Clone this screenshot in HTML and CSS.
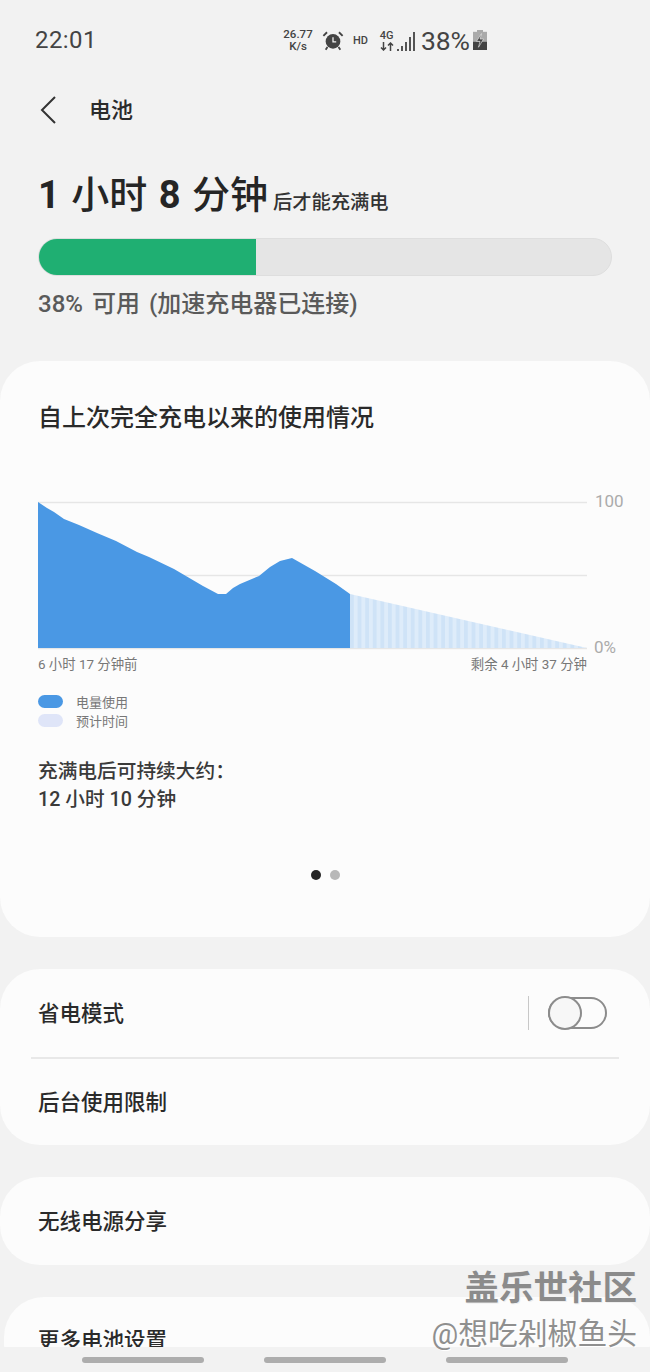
FILE: index.html
```html
<!DOCTYPE html>
<html lang="zh">
<head>
<meta charset="utf-8">
<title>电池</title>
<link rel="stylesheet" href="styles.css">
</head>
<body>
<div class="page">
  <div class="status">
    <span class="time">22:01</span>
    <div class="status-icons">
      <span class="speed">26.77<br>K/s</span>
      <svg class="alarm" width="22" height="21" viewBox="0 0 24 22">
        <circle cx="12" cy="12" r="8" fill="#444"/>
        <path d="M12 7.500V12.500H15.500" fill="none" stroke="#f2f2f2" stroke-width="1.400"/>
        <path d="M1.500 6 5.500 2M22.500 6 18.500 2" stroke="#444" stroke-width="2" fill="none"/>
        <path d="M6 18 4 21M18 18 20 21" stroke="#444" stroke-width="2" fill="none"/>
      </svg>
      <span class="hd">HD</span>
      <div class="net">
        <span class="net-4g">4G</span>
        <svg width="14" height="9" viewBox="0 0 14 9"><path d="M3.500 0V8M1 5.500 3.500 8 6 5.500M10.500 9V1M8 3.500 10.500 1 13 3.500" stroke="#444" stroke-width="1.500" fill="none"/></svg>
      </div>
      <svg class="signal" width="18" height="23" viewBox="0 0 18 23">
        <path d="M1 20V22M5 17V22M9 13V22M13 8V22M17 3V22" stroke="#444" stroke-width="1.800" fill="none"/>
      </svg>
      <span class="pct">38%</span>
      <svg class="batt" width="14" height="20" viewBox="0 0 14 22" preserveAspectRatio="none">
        <rect x="4" y="0" width="6" height="3" fill="#aaa"/>
        <rect x="0" y="2" width="14" height="20" fill="#aaa"/>
        <rect x="0" y="13" width="14" height="9" fill="#444"/>
        <path d="M8.500 4 3.500 12.500H7L5.500 19 10.500 10H7Z" fill="#444" stroke="#f2f2f2" stroke-width=".6"/>
      </svg>
    </div>
  </div>

  <div class="toolbar">
    <svg class="back" width="18" height="30" viewBox="0 0 18 30"><path d="M16 2 3 15 16 28" fill="none" stroke="#333" stroke-width="2"/></svg>
    <span class="toolbar-title">电池</span>
  </div>

  <section class="summary">
    <div class="eta"><span class="eta-main"><b>1</b> 小时 <b>8</b> 分钟</span> <span class="eta-sub">后才能充满电</span></div>
    <div class="bar"><div class="bar-fill"></div></div>
    <div class="avail">38% 可用 (加速充电器已连接)</div>
  </section>

  <section class="card usage">
    <h2 class="usage-title">自上次完全充电以来的使用情况</h2>
    <svg class="chart" width="650" height="187" viewBox="0 490 650 187">
      <defs>
        <pattern id="stripes" x="350" y="0" width="7.600" height="10" patternUnits="userSpaceOnUse">
          <rect width="7.600" height="10" fill="#cfe3f7"/>
          <rect x="3.800" width="3.800" height="10" fill="#deecfa"/>
        </pattern>
      </defs>
      <path d="M38 502.500H587M38 575.500H587M38 648.500H587" stroke="#e6e6e6" stroke-width="1.500" fill="none"/>
      <path d="M38 502 L47 508 L54 512 L64 519 L79 525 L97 533 L116 541 L137 552 L149 557 L174 569 L203 586 L218 594 L226 594 L233 588 L240 584 L259 576 L270 567 L280 561 L292 558 L315 571 L336 584 L350 594 V648 H38 Z" fill="#4a98e4"/>
      <path d="M350 594 L587 648 H350 Z" fill="url(#stripes)"/>
      <text x="595" y="507" class="axis">100</text>
      <text x="594" y="653" class="axis">0%</text>
      <text x="38" y="669" class="tick">6 小时 17 分钟前</text>
      <text x="587" y="669" class="tick tick-end">剩余 4 小时 37 分钟</text>
    </svg>
    <ul class="legend">
      <li class="legend-item"><span class="swatch swatch-used"></span>电量使用</li>
      <li class="legend-item"><span class="swatch swatch-est"></span>预计时间</li>
    </ul>
    <p class="lasts">充满电后可持续大约：<br>12 小时 10 分钟</p>
    <div class="dots"><span class="dot dot-on"></span><span class="dot"></span></div>
  </section>

  <section class="card rows">
    <div class="row row-saver">
      <span class="row-label">省电模式</span>
      <div class="toggle-wrap"><span class="toggle"><span class="knob"></span></span></div>
    </div>
    <div class="divider"></div>
    <div class="row"><span class="row-label">后台使用限制</span></div>
  </section>

  <section class="card single"><span class="row-label">无线电源分享</span></section>
  <section class="card more"><span class="row-label">更多电池设置</span></section>

  <div class="navbar">
    <span class="handle"></span><span class="handle"></span><span class="handle"></span>
  </div>
  <div class="watermark">
    <div class="wm-main">盖乐世社区</div>
    <div class="wm-sub">@想吃剁椒鱼头</div>
  </div>
</div>
</body>
</html>
```

FILE: styles.css
```css
* { box-sizing: border-box; margin: 0; padding: 0; }
html, body { background: #f2f2f2; }
body { font-family: Roboto, "Noto Sans CJK SC", sans-serif; color: #252525; }
.page { position: relative; width: 650px; height: 1372px; overflow: hidden; }

.status { height: 80px; display: flex; align-items: center; padding-left: 35px; }
.time { font-size: 24px; color: #444; width: 247px; letter-spacing: .4px; }
.status-icons { display: flex; align-items: center; color: #444; }
.speed { font-size: 11.500px; font-weight: 500; line-height: 12px; text-align: center; width: 32px; }
.alarm { margin-left: 8px; }
.hd { font-size: 11px; font-weight: 500; margin-left: 9px; width: 17px; }
.net { display: flex; flex-direction: column; align-items: center; margin-left: 9px; width: 15px; line-height: 0; }
.net-4g { font-size: 11px; font-weight: 500; line-height: 12px; }
.signal { margin-left: 3px; }
.pct { font-size: 26.500px; margin-left: 6px; letter-spacing: -.2px; }
.batt { margin-left: 3px; }

.toolbar { height: 60px; display: flex; align-items: center; padding: 0 0 0 39px; }
.back { flex: none; }
.toolbar-title { font-size: 22px; font-weight: 500; margin: -4px 0 0 32px; color: #2b2b2b; }

.summary { padding: 30px 38px 0; height: 221px; }
.eta { display: flex; align-items: flex-end; height: 50px; gap: 5px; }
.eta-main { font-size: 38px; font-weight: 500; line-height: 50px; color: #252525; white-space: pre; word-spacing: 2px; }
.eta-main b { font-weight: 700; }
.eta-sub { font-size: 19.300px; font-weight: 500; line-height: 34px; color: #333; }
.bar { height: 38px; margin-top: 18px; border-radius: 19px; background: #e5e5e5; overflow: hidden; border: 1px solid #dedede; width: 574px; }
.bar-fill { width: 217px; height: 100%; background: #1faf72; }
.avail { font-size: 24px; font-weight: 500; color: #5a5a5a; line-height: 32px; margin-top: 12px; white-space: nowrap; word-spacing: 3px; }

.card { background: #fcfcfc; border-radius: 40px; margin-bottom: 32px; }
.usage { height: 576px; position: relative; padding-top: 40px; }
.usage-title { font-size: 24px; font-weight: 500; line-height: 34px; padding-left: 38px; color: #2a2a2a; }
.chart { display: block; margin-top: 55px; }
.axis { font-size: 17px; fill: #ababab; font-family: Roboto, sans-serif; }
.tick { font-size: 13.400px; fill: #777; font-family: Roboto, "Noto Sans CJK SC", sans-serif; }
.tick-end { text-anchor: end; }
.legend { list-style: none; padding-left: 38px; margin-top: 15px; }
.legend-item { display: flex; align-items: center; height: 19px; font-size: 13px; color: #777; }
.swatch { width: 25px; height: 13px; border-radius: 7px; margin-right: 13px; }
.swatch-used { background: #4a98e4; }
.swatch-est { background: #dfe5f8; }
.lasts { font-size: 19.700px; font-weight: 500; line-height: 28px; padding-left: 38px; margin-top: 28px; color: #3a3a3a; }
.dots { display: flex; justify-content: center; gap: 9px; margin-top: 56px; }
.dot { width: 10px; height: 10px; border-radius: 50%; background: #b8b8b8; }
.dot-on { background: #252525; }

.rows { height: 176px; }
.row { height: 88px; display: flex; align-items: center; justify-content: space-between; padding: 0 43px 0 38px; }
.row-saver { height: 89px; }
.row-label { font-size: 21.500px; font-weight: 500; color: #2a2a2a; margin-top: -4px; }
.toggle-wrap { height: 34px; display: flex; align-items: center; border-left: 1px solid #c8c8c8; padding-left: 19px; margin-top: -2px; }
.toggle { position: relative; display: block; width: 59px; height: 32px; border: 2px solid #8c8c8c; border-radius: 16px; }
.knob { position: absolute; left: -2px; top: -2px; width: 34px; height: 34px; margin-top: -1px; border: 2px solid #8c8c8c; border-radius: 50%; background: #f7f7f7; }
.divider { height: 2px; margin: -1px 31px; background: #e8e8e8; }
.single { height: 88px; display: flex; align-items: center; padding-left: 38px; }
.more { height: 88px; padding: 30px 0 0 34px; margin: 0 0 0 4px; width: 646px; }
.more .row-label { display: block; }

.navbar { position: absolute; left: 0; bottom: 0; width: 650px; height: 25px; background: #f2f2f2; display: flex; justify-content: center; gap: 60px; padding-top: 10px; }
.handle { width: 122px; height: 6px; border-radius: 3px; background: #adadad; }

.watermark { position: absolute; right: 13px; top: 1268px; text-align: right; white-space: nowrap; }
.wm-main { font-size: 34.500px; font-weight: 700; line-height: 40px; color: #8b8b8b; text-shadow: 1px 1px 0 #eee; }
.wm-sub { font-size: 29.800px; line-height: 36px; margin-top: 8px; color: #8f8f8f; text-shadow: 1px 1px 0 #fff; }
```
